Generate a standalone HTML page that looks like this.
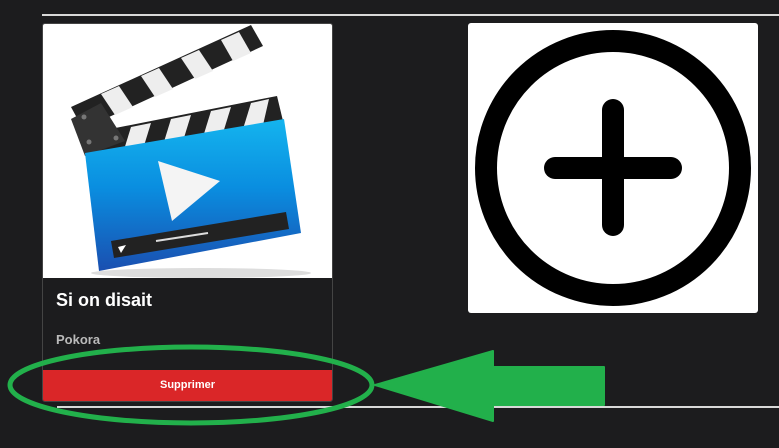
<!DOCTYPE html>
<html><head><style>
html,body{margin:0;padding:0;background:#1c1c1e;width:779px;height:448px;overflow:hidden;font-family:"Liberation Sans",sans-serif}
.line{position:absolute;height:2px;background:#d8d8d8}
.card{position:absolute;left:42px;top:23px;width:289px;height:377px;background:#1c1c1e;border:1px solid #444;border-radius:3px;overflow:hidden}
.img{position:absolute;left:0;top:0;width:289px;height:254px;background:#fff}
.title{position:absolute;left:13px;top:266px;color:#fff;font-weight:bold;font-size:18px}
.sub{position:absolute;left:13px;top:308px;color:#bbb;font-weight:bold;font-size:13px}
.btn{position:absolute;left:0;top:346px;width:289px;height:31px;background:#da2628;color:#fff;font-weight:bold;font-size:11px;text-align:center;line-height:30px}
.plus{position:absolute;left:468px;top:23px;width:290px;height:290px;background:#fff;border-radius:3px}
</style></head><body>
<div class="line" style="left:42px;top:14px;width:737px"></div>
<div class="line" style="left:57px;top:406px;width:722px"></div>
<div class="card">
 <div class="img">
  <svg width="289" height="254" viewBox="42 23 289 254">
   <defs>
    <linearGradient id="b" x1="0" y1="0" x2="0" y2="1"><stop offset="0" stop-color="#14b4ee"/><stop offset="0.45" stop-color="#0a8ee0"/><stop offset="1" stop-color="#1a4fb0"/></linearGradient>
   </defs>
   <ellipse cx="200" cy="272" rx="110" ry="5" fill="#ddd"/>
   <!-- top arm -->
   <polygon points="70,106 250,24 262,45 82,128" fill="#222"/>
   <g fill="#eee">
    <polygon points="100,93 118,85 132,106 114,114"/><polygon points="140,75 158,67 172,88 154,96"/><polygon points="180,57 198,49 212,70 194,78"/><polygon points="220,39 238,31 250,52 232,60"/>
   </g>
   <!-- lower bar -->
   <polygon points="84,133 276,95 282,120 88,158" fill="#222"/>
   <g fill="#eee">
    <polygon points="130,126 150,122 142,148 122,152"/><polygon points="170,118 190,114 182,140 162,144"/><polygon points="210,110 230,106 222,132 202,136"/><polygon points="250,102 268,98 262,124 242,128"/>
   </g>
   <polygon points="70,118 100,102 124,140 84,155" fill="#333"/>
   <circle cx="83" cy="116" r="2.5" fill="#777"/><circle cx="88" cy="141" r="2.5" fill="#777"/><circle cx="115" cy="137" r="2.5" fill="#777"/>
   <polygon points="84,152 283,118 300,232 98,270" fill="url(#b)" />
   <polygon points="157,160 219,180 171,220" fill="#f4f4f4"/>
   <polygon points="110,240 285,211 288,228 113,257" fill="#222"/>
   <polygon points="117,246 125,244 120,252" fill="#fff"/>
   <line x1="155" y1="240" x2="207" y2="232" stroke="#ddd" stroke-width="2"/>
  </svg>
 </div>
 <div class="title">Si on disait</div>
 <div class="sub">Pokora</div>
 <div class="btn">Supprimer</div>
</div>
<div class="plus">
 <svg width="290" height="290" viewBox="468 23 290 290">
  <circle cx="613" cy="168" r="127" fill="none" stroke="#000" stroke-width="22"/>
  <line x1="613" y1="110" x2="613" y2="225" stroke="#000" stroke-width="22" stroke-linecap="round"/>
  <line x1="555" y1="168" x2="671" y2="168" stroke="#000" stroke-width="22" stroke-linecap="round"/>
 </svg>
</div>
<svg style="position:absolute;left:0;top:0" width="779" height="448">
 <ellipse cx="191" cy="385" rx="181" ry="38" fill="none" stroke="#22b04b" stroke-width="5"/>
 <polygon points="375,385 493,351 493,367 604,367 604,405 493,405 493,421" fill="#22b04b" stroke="#22b04b" stroke-width="2" stroke-linejoin="round"/>
</svg>
</body></html>
